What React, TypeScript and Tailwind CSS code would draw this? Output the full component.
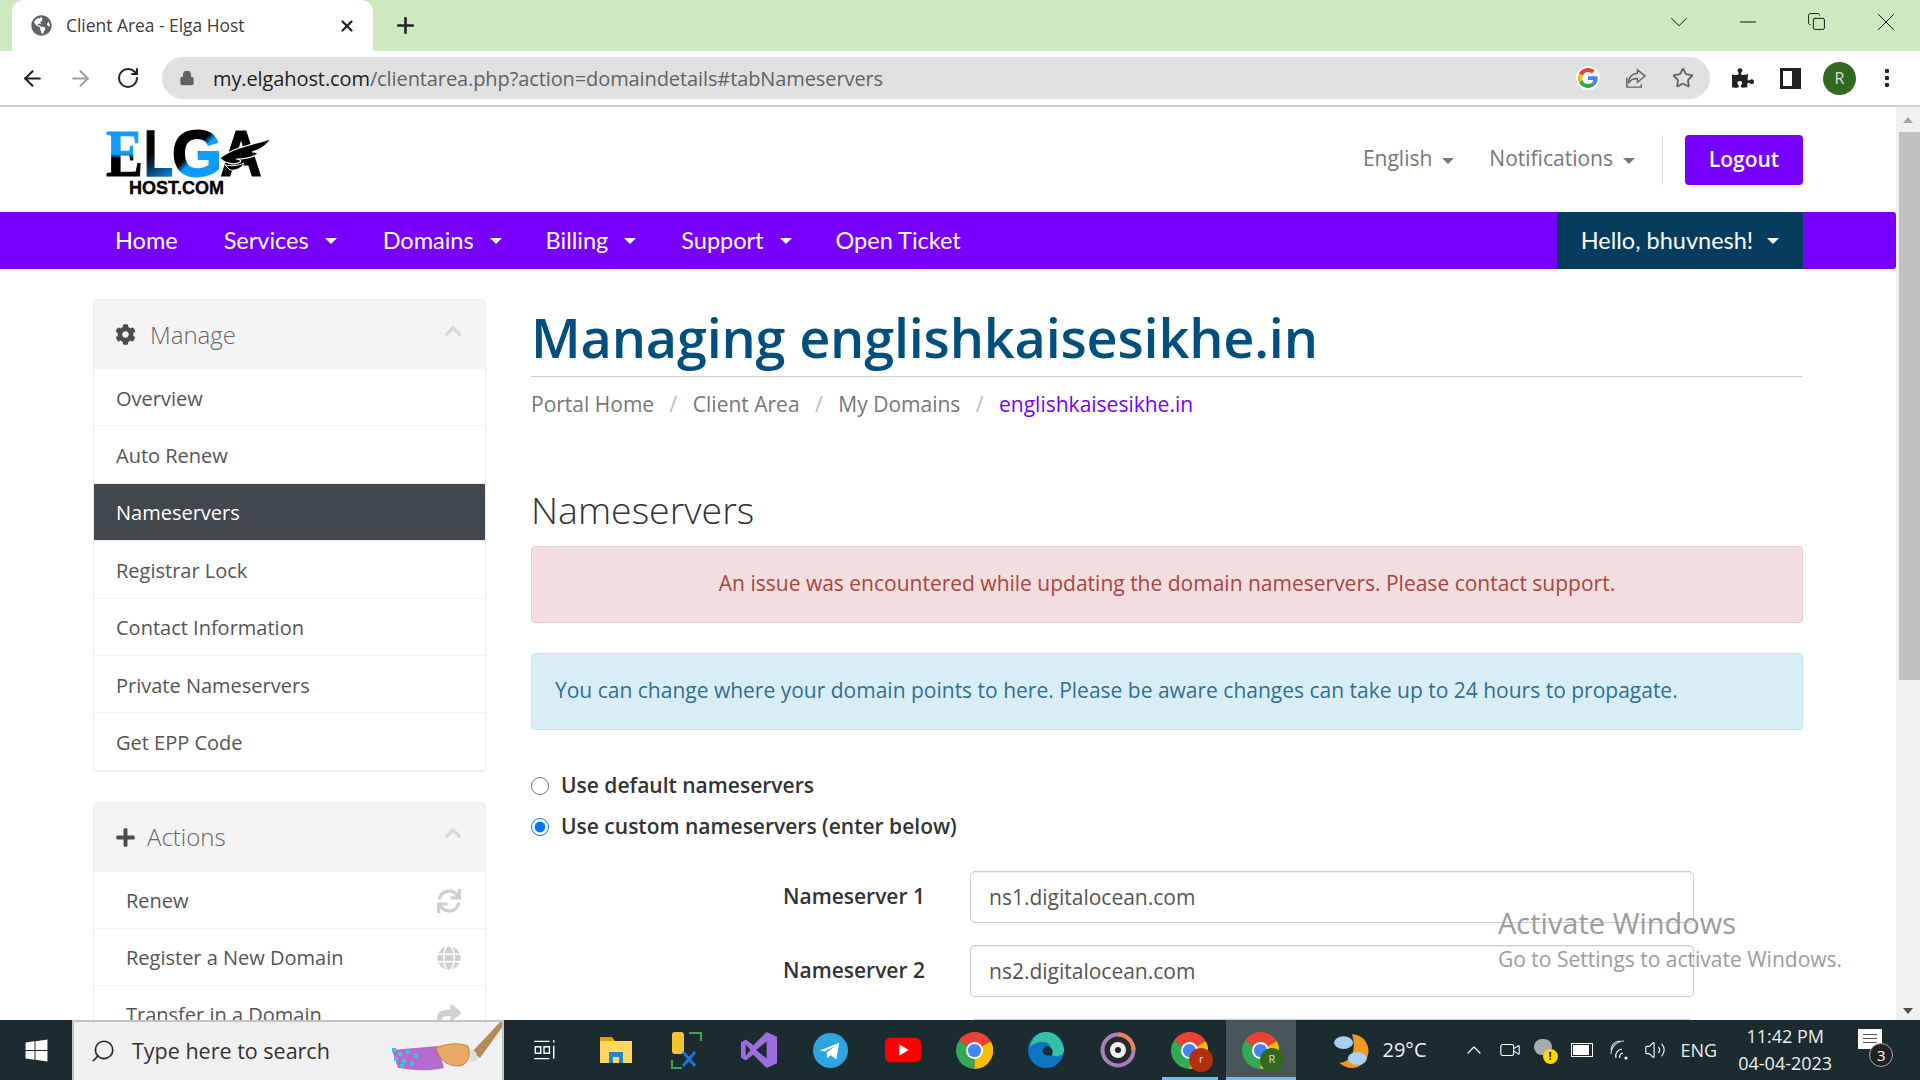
import React from 'react';
import { ArrowLeft, ArrowRight, RotateCw, Lock, Star, MoreVertical, Search, X, Plus, ChevronDown, Minus, Copy, ChevronUp, Volume2, Video } from 'lucide-react';
import { FaCog, FaPlus, FaSync, FaGlobe, FaShare, FaWindows, FaGlobeAmericas, FaPuzzlePiece } from 'react-icons/fa';

const sans = 'font-["Open_Sans",sans-serif]';

const Caret = ({ className = '' }: { className?: string }) => (
  <span className={`inline-block w-0 h-0 border-x-[6px] border-x-transparent border-t-[6px] border-t-current ${className}`} />
);

const ChromeIcon = ({ badge, badgeColor }: { badge?: string; badgeColor?: string }) => (
  <div className="relative w-[37px] h-[37px]">
    <svg viewBox="0 0 48 48" className="w-full h-full">
      <path d="M24 24 L45 12 A24 24 0 0 0 4 11 Z" fill="#ea4335" />
      <path d="M24 24 L4 11 A24 24 0 0 0 24 48 Z" fill="#34a853" />
      <path d="M24 24 L24 48 A24 24 0 0 0 45 12 Z" fill="#fbbc04" />
      <circle cx="24" cy="24" r="11" fill="#fff" />
      <circle cx="24" cy="24" r="8.5" fill="#4285f4" />
    </svg>
    {badge && (
      <span className={`absolute right-[-5px] bottom-[-3px] w-[24px] h-[24px] rounded-full flex items-center justify-center text-[11px] text-[#ddd] ${badgeColor}`}>
        {badge}
      </span>
    )}
  </div>
);

const Logo = () => (
  <svg viewBox="0 0 170 72" className="w-[170px] h-[72px] overflow-visible">
    <defs>
      <linearGradient id="elgaE" gradientUnits="userSpaceOnUse" x1="0" y1="6" x2="0" y2="52">
        <stop offset="0.52" stopColor="#0f9bff" />
        <stop offset="0.62" stopColor="#000" />
      </linearGradient>
      <linearGradient id="elgaL" gradientUnits="userSpaceOnUse" x1="44" y1="6" x2="72" y2="52">
        <stop offset="0.4" stopColor="#000" />
        <stop offset="1" stopColor="#0f8fef" />
      </linearGradient>
      <linearGradient id="elgaG" gradientUnits="userSpaceOnUse" x1="70" y1="6" x2="118" y2="52">
        <stop offset="0.42" stopColor="#000" />
        <stop offset="0.52" stopColor="#0f9bff" />
      </linearGradient>
    </defs>
    <text y="51.500" fontFamily="'Liberation Sans',sans-serif" fontWeight="700" fontSize="64">
      <tspan x="2" fontFamily="'Liberation Serif',serif" fontSize="68" fill="url(#elgaE)" stroke="url(#elgaE)" strokeWidth="1" textLength="37" lengthAdjust="spacingAndGlyphs">E</tspan>
      <tspan x="40" fill="url(#elgaL)" stroke="url(#elgaL)" strokeWidth="1.500" textLength="29" lengthAdjust="spacingAndGlyphs">L</tspan>
      <tspan x="68" fill="url(#elgaG)" stroke="url(#elgaG)" strokeWidth="2" textLength="50" lengthAdjust="spacingAndGlyphs">G</tspan>
      <tspan x="116" fill="#000" stroke="#000" strokeWidth="1" textLength="42" lengthAdjust="spacingAndGlyphs">A</tspan>
    </text>
    <path d="M116 34 C128 24 150 20 167 15 C162 22 156 26 148 28 C154 28 155 29 152 31 C146 34 138 35 132 35 C138 36 138 38 134 39 C129 41 120 39 116 34 Z" fill="#000" stroke="#fff" strokeWidth="1.200" />
    <path d="M121 41 C127 42 134 42 140 39 C138 44 132 47 126 46 Z" fill="#000" stroke="#fff" strokeWidth="1" />
    <text x="25" y="69.500" fontFamily="'Liberation Sans',sans-serif" fontWeight="700" fontSize="19" fill="#000" stroke="#000" strokeWidth="0.400" textLength="95" lengthAdjust="spacingAndGlyphs">HOST.COM</text>
  </svg>
);

const menu = [
  { label: 'Overview' },
  { label: 'Auto Renew' },
  { label: 'Nameservers', active: true },
  { label: 'Registrar Lock' },
  { label: 'Contact Information' },
  { label: 'Private Nameservers' },
  { label: 'Get EPP Code' },
];

const actions = [
  { label: 'Renew', icon: <FaSync /> },
  { label: 'Register a New Domain', icon: <FaGlobe /> },
  { label: 'Transfer in a Domain', icon: <FaShare /> },
];

const PanelHead = ({ icon, title, titleClass }: { icon: React.ReactNode; title: string; titleClass: string }) => (
  <div className="h-[69px] bg-[#f4f4f4] flex items-center pl-[21px] pr-[19px] rounded-t-[4px]">
    <span className="w-[22px] flex text-[21px] text-[#4d4d4d]">{icon}</span>
    <span className={`text-[24px] font-light text-[#666] ${titleClass}`}>{title}</span>
    <ChevronUp className="ml-auto mb-[8px] text-[#d9d9d9]" size={26} strokeWidth={3} />
  </div>
);

const NsRow = ({ label, value }: { label: string; value: string }) => (
  <div className="flex items-center h-[52px] mb-[22px]">
    <label className="w-[439px] pr-[45px] text-right text-[21px] font-semibold text-[#333]">{label}</label>
    <input
      readOnly
      value={value}
      className="w-[724px] h-[52px] px-[18px] rounded-[5px] border border-[#ccc] shadow-[inset_0_1px_1px_rgba(0,0,0,0.075)] text-[21px] text-[#555] bg-white outline-none"
    />
  </div>
);

const Slot = ({ children }: { children: React.ReactNode }) => (
  <div className="w-[71.750px] h-[60px] flex items-center justify-center relative">{children}</div>
);

export default function App() {
  return (
    <div className={`w-[1920px] h-[1080px] flex flex-col overflow-hidden bg-white relative ${sans}`}>
      {/* tab strip */}
      <div className="h-[51px] shrink-0 bg-[#cce9c0] flex items-end pl-[12px]">
        <div className="w-[361px] h-[51px] bg-white rounded-t-[12px] flex items-center pl-[19px] pr-[17px]">
          <FaGlobeAmericas className="text-[#5f6368]" size={21} />
          <span className="ml-[14px] text-[17.400px] text-[#3c3c3c]">Client Area - Elga Host</span>
          <X className="ml-auto text-[#222]" size={18} strokeWidth={3} />
        </div>
        <Plus className="ml-[20px] mb-[13px] text-[#222]" size={25} strokeWidth={2.5} />
        <div className="ml-auto flex items-center h-[51px] text-[#111] pb-[8px]">
          <span className="w-[69px] flex justify-center"><ChevronDown size={30} strokeWidth={0.8} /></span>
          <span className="w-[69px] flex justify-center"><Minus size={26} strokeWidth={1} /></span>
          <span className="w-[69px] flex justify-center"><Copy size={19} strokeWidth={1.2} /></span>
          <span className="w-[69px] flex justify-center"><X size={30} strokeWidth={0.8} /></span>
        </div>
      </div>

      {/* toolbar */}
      <div className="h-[56px] shrink-0 bg-white flex items-center border-b-[2px] border-[#cfcfcf]">
        <ArrowLeft className="ml-[20px] text-[#222]" size={25} strokeWidth={2} />
        <ArrowRight className="ml-[23px] text-[#a0a0a0]" size={25} strokeWidth={2} />
        <RotateCw className="ml-[23px] text-[#222]" size={24} strokeWidth={2} />
        <div className="ml-[22px] w-[1548px] h-[42px] rounded-full bg-[#e0e0e0] flex items-center pl-[17px] pr-[16px]">
          <Lock className="text-[#5f6368]" size={16} fill="#5f6368" />
          <span className="ml-[18px] mt-[1px] text-[20px] tracking-[-0.1px] text-[#222]">
            my.elgahost.com<span className="text-[#5f6368]">/clientarea.php?action=domaindetails#tabNameservers</span>
          </span>
          <span className="ml-auto mr-[3px] w-[24px] h-[24px] rounded-full bg-white flex items-center justify-center">
            <svg viewBox="0 0 48 48" className="w-[20px] h-[20px]">
              <path fill="#ea4335" d="M24 9.500c3.500 0 6.700 1.300 9.200 3.400l6.900-6.900C35.900 2.200 30.300 0 24 0 14.600 0 6.500 5.400 2.600 13.200l8 6.200C12.500 13.600 17.800 9.500 24 9.500z" />
              <path fill="#4285f4" d="M47 24.500c0-1.600-.1-3.100-.4-4.500H24v9h13c-.6 3-2.200 5.500-4.800 7.200l7.700 6C44.400 38 47 31.800 47 24.500z" />
              <path fill="#fbbc04" d="M10.600 28.600A14.500 14.500 0 0 1 10.600 19.400l-8-6.200a24 24 0 0 0 0 21.600z" />
              <path fill="#34a853" d="M24 48c6.500 0 11.900-2.100 15.900-5.800l-7.700-6c-2.200 1.400-4.900 2.300-8.200 2.300-6.200 0-11.500-4.200-13.400-9.900l-8 6.200C6.500 42.600 14.600 48 24 48z" />
            </svg>
          </span>
          <svg viewBox="0 0 24 24" className="ml-[21px] w-[23px] h-[23px]" fill="none" stroke="#5f6368" strokeWidth="1.500">
            <path d="M3 11v10h15v-3" />
            <path d="M14 3l8 6.500-8 6.500v-4c-4 0-7 1-9.500 5 .5-6 4-10 9.500-10.500z" />
          </svg>
          <Star className="ml-[25px] text-[#5f6368]" size={22} strokeWidth={2} />
        </div>
        <FaPuzzlePiece className="ml-[22px] text-[#202124]" size={22} />
        <span className="ml-[26px] w-[21px] h-[21px] border-[3px] border-r-[9px] border-[#202124]" />
        <span className="ml-[22px] w-[33px] h-[33px] rounded-full bg-[#33691e] text-[#ddd] text-[16px] flex items-center justify-center">R</span>
        <MoreVertical className="ml-[19px] text-[#202124]" size={24} strokeWidth={2.5} />
      </div>

      {/* page */}
      <div className="flex-1 min-h-0 flex overflow-hidden">
        <div className="w-[1896px] overflow-hidden">
          <div className="h-[105px] flex items-center pl-[104px] pr-[93px]">
            <Logo />
            <div className="ml-auto flex items-center text-[#777] text-[21px]">
              <span className="mt-[-2px]">English</span>
              <Caret className="ml-[10px] mt-[2px]" />
              <span className="ml-[35px] mt-[-2px]">Notifications</span>
              <Caret className="ml-[10px] mt-[2px]" />
              <span className="ml-[27px] h-[50px] border-l border-[#ddd]" />
              <button className="ml-[22px] w-[118px] h-[50px] rounded-[4px] bg-[#7800ff] text-white text-[21px] font-semibold">Logout</button>
            </div>
          </div>

          <div className="h-[57px] bg-[#7800ff] rounded-r-[3px] flex items-center pl-[115px] pr-[93px] text-white text-[23.500px] font-['Lato',sans-serif]">
            <span>Home</span>
            <span className="ml-[46px]">Services</span>
            <Caret className="ml-[16px]" />
            <span className="ml-[46px]">Domains</span>
            <Caret className="ml-[16px]" />
            <span className="ml-[44px]">Billing</span>
            <Caret className="ml-[16px]" />
            <span className="ml-[45px]">Support</span>
            <Caret className="ml-[16px]" />
            <span className="ml-[44px]">Open Ticket</span>
            <div className="ml-auto w-[246px] h-full bg-[#063d5f] flex items-center justify-center">
              Hello, bhuvnesh!
              <Caret className="ml-[14px]" />
            </div>
          </div>

          <div className="flex pl-[93px] pr-[92px] pt-[30px] gap-[45px]">
            {/* sidebar */}
            <div className="w-[393px] shrink-0">
              <div className="border border-[#eee] rounded-[4px] mb-[30px]">
                <PanelHead icon={<FaCog />} title="Manage" titleClass="ml-[13px]" />
                {menu.map(item => (
                  <div
                    key={item.label}
                    className={`h-[57.400px] flex items-center pl-[22px] pt-[3px] text-[20px] border-b border-[#f1f1f1] ${
                      item.active ? 'bg-[#41484d] text-white' : 'text-[#555]'
                    }`}
                  >
                    {item.label}
                  </div>
                ))}
              </div>
              <div className="border border-[#eee] rounded-[4px]">
                <PanelHead icon={<FaPlus />} title="Actions" titleClass="ml-[10px]" />
                {actions.map(item => (
                  <div key={item.label} className="h-[57px] flex items-center pl-[32px] pr-[24px] pt-[2px] text-[20px] text-[#555] border-b border-[#f1f1f1]">
                    {item.label}
                    <span className="ml-auto text-[24px] text-[#d0d0d0]">{item.icon}</span>
                  </div>
                ))}
              </div>
            </div>

            {/* main */}
            <div className="w-[1272px]">
              <h1 className="text-[54px] leading-[76px] font-semibold tracking-[-0.2px] text-[#004f7e] pb-[1px] border-b border-[#ccc]">
                Managing englishkaisesikhe.in
              </h1>
              <div className="flex items-center mt-[12px] text-[21px] text-[#777]">
                <span>Portal Home</span>
                <span className="mx-[15.500px] text-[#bbb]">/</span>
                <span>Client Area</span>
                <span className="mx-[15.500px] text-[#bbb]">/</span>
                <span>My Domains</span>
                <span className="mx-[15.500px] text-[#bbb]">/</span>
                <span className="text-[#7800ff]">englishkaisesikhe.in</span>
              </div>
              <h2 className="mt-[64px] text-[37.500px] leading-[50px] font-light text-[#333]">Nameservers</h2>
              <div className="mt-[11px] h-[77px] rounded-[4px] bg-[#f2dede] border border-[#ebccd1] flex items-center justify-center text-[21px] text-[#a94442]">
                An issue was encountered while updating the domain nameservers. Please contact support.
              </div>
              <div className="mt-[30px] h-[77px] rounded-[4px] bg-[#d9edf7] border border-[#bce8f1] flex items-center pl-[23px] text-[21px] text-[#31708f]">
                You can change where your domain points to here. Please be aware changes can take up to 24 hours to propagate.
              </div>
              <label className="mt-[36px] h-[41px] flex items-center text-[21px] font-semibold text-[#333]">
                <input type="radio" name="ns" readOnly className="w-[18px] h-[18px] mr-[12px] accent-[#0075ff]" />
                Use default nameservers
              </label>
              <label className="h-[41px] flex items-center text-[21px] font-semibold text-[#333]">
                <input type="radio" name="ns" checked readOnly className="w-[18px] h-[18px] mr-[12px] accent-[#0075ff]" />
                Use custom nameservers (enter below)
              </label>
              <div className="mt-[23px]">
                <NsRow label="Nameserver 1" value="ns1.digitalocean.com" />
                <NsRow label="Nameserver 2" value="ns2.digitalocean.com" />
                <NsRow label="" value="" />
              </div>
            </div>
          </div>
        </div>

        {/* scrollbar */}
        <div className="w-[24px] bg-[#f1f1f1] flex flex-col items-center">
          <span className="mt-[10px] w-0 h-0 border-x-[5px] border-x-transparent border-b-[6px] border-b-[#a3a3a3]" />
          <div className="mt-[9px] w-[21px] ml-[2px] h-[548px] bg-[#c1c1c1]" />
          <span className="mt-auto mb-[6px] w-0 h-0 border-x-[5px] border-x-transparent border-t-[6px] border-t-[#505050]" />
        </div>
      </div>

      {/* taskbar */}
      <div className="h-[60px] shrink-0 bg-[#1b2b30] flex items-center text-white">
        <div className="w-[72px] flex justify-center"><FaWindows size={25} /></div>
        <div className="w-[432px] h-full bg-[#f0f0f0] border-t-[2px] border-x-[2px] border-[#c4c4c4] flex items-center pl-[16px] overflow-hidden relative">
          <Search className="text-[#222] -scale-x-100" size={26} strokeWidth={1.5} />
          <span className="ml-[16px] text-[21.500px] text-[#333]">Type here to search</span>
          <svg viewBox="0 0 120 60" className="absolute right-[-2px] top-[-2px] w-[120px] h-[60px]">
            <path d="M8 30 L54 26 L60 48 C44 52 26 50 14 48 Z" fill="#a855c7" opacity="0.85" />
            <g fill="#39c5d8">
              <rect x="8" y="28" width="4" height="4" />
              <rect x="14" y="32" width="4" height="4" />
              <rect x="10" y="37" width="4" height="4" />
              <rect x="18" y="39" width="4" height="4" />
              <rect x="22" y="30" width="4" height="4" />
              <rect x="16" y="44" width="4" height="4" />
              <rect x="26" y="42" width="4" height="4" />
              <rect x="30" y="34" width="4" height="4" />
            </g>
            <path d="M88 32 L118 0 L122 2 L96 38 Z" fill="#b48a58" />
            <path d="M84 28 L92 32 L94 40 L86 42 Z" fill="#ddd" />
            <path d="M84 26 C74 22 60 24 52 28 C54 38 62 46 74 46 C82 46 88 38 84 26 Z" fill="#e9a867" stroke="#b8732e" strokeWidth="0.800" />
          </svg>
        </div>
        <div className="flex items-center ml-[4px]">
          <Slot>
            <svg viewBox="0 0 24 24" className="w-[26px] h-[26px]" fill="none" stroke="#fff" strokeWidth="1.300">
              <path d="M3 4h14M3 20h14M4 9h5v6H4zM12 9h5v6h-5zM21 3v2M21 8v12" />
            </svg>
          </Slot>
          <Slot>
            <svg viewBox="0 0 32 26" className="w-[32px] h-[26px]">
              <path d="M0 0h12l3 4H0z" fill="#e0a100" />
              <rect y="4" width="32" height="22" fill="#ffd75e" />
              <path d="M9 26V15h14v11h-4v-6h-6v6z" fill="#1e88c7" />
            </svg>
          </Slot>
          <Slot>
            <svg viewBox="0 0 36 40" className="w-[36px] h-[40px]">
              <rect x="3" y="2" width="12" height="22" rx="3" fill="#f4c430" />
              <path d="M20 3h12v8M3 30v8h10" fill="none" stroke="#3fa34d" strokeWidth="2" />
              <path d="M14 36l12-14M26 36L14 22" stroke="#1976d2" strokeWidth="3" />
            </svg>
          </Slot>
          <Slot>
            <svg viewBox="0 0 40 40" className="w-[38px] h-[38px]">
              <path d="M28 1l11 5v28l-11 5-14-14-8 6-5-3V12l5-3 8 6z" fill="#9b6ddf" />
              <path d="M28 11L17 20l11 9z" fill="#1b2b30" />
              <path d="M6 14v12l5-6z" fill="#1b2b30" />
            </svg>
          </Slot>
          <Slot>
            <svg viewBox="0 0 36 36" className="w-[35px] h-[35px]">
              <circle cx="18" cy="18" r="18" fill="#2ca5e0" />
              <path d="M7 18l20-8-3 17-6-4-3 3-1-6 9-7-11 6z" fill="#fff" />
            </svg>
          </Slot>
          <Slot>
            <svg viewBox="0 0 38 26" className="w-[36px] h-[28px]">
              <rect width="38" height="26" rx="6" fill="#f00" />
              <path d="M15 7l10 6-10 6z" fill="#fff" />
            </svg>
          </Slot>
          <Slot><ChromeIcon /></Slot>
          <Slot>
            <svg viewBox="0 0 36 36" className="w-[36px] h-[36px]">
              <circle cx="18" cy="18" r="18" fill="#0f74c4" />
              <path d="M2 15C4 5 11 0 18 0c9 0 17 7 18 18 0 5-5 7-10 6-4-1-5-5-3-8-1-4-4-6-8-6-6 0-10 2-13 5z" fill="#35c1a8" />
              <path d="M18 14c5 0 8 4 6 9-2 1-7 1-9-2-1-2 0-5 3-7z" fill="#1b2b30" />
            </svg>
          </Slot>
          <Slot>
            <svg viewBox="0 0 36 36" className="w-[36px] h-[36px]">
              <circle cx="18" cy="18" r="15.500" fill="#2a2a2a" stroke="#a77fbf" strokeWidth="4" />
              <path d="M18 2.500A15.500 15.500 0 0 1 33.500 18" fill="none" stroke="#e8835a" strokeWidth="4" />
              <circle cx="18" cy="18" r="8" fill="#eee" />
              <circle cx="18" cy="18" r="3" fill="#222" />
            </svg>
          </Slot>
          <Slot>
            <ChromeIcon badge="r" badgeColor="bg-[#b32f0f]" />
            <span className="absolute bottom-0 left-[8px] right-[8px] h-[3px] bg-[#76b9ed]" />
          </Slot>
          <div className="w-[70px] h-[60px] flex items-center justify-center relative bg-[#48565b]">
            <ChromeIcon badge="R" badgeColor="bg-[#33691e]" />
            <span className="absolute bottom-0 left-0 right-0 h-[3px] bg-[#76b9ed]" />
          </div>
        </div>
        <svg viewBox="0 0 36 36" className="ml-[37px] w-[38px] h-[38px]">
          <path d="M18 3a16 16 0 1 1-12 27c10 0 17-10 12-27z" fill="#f29a1f" />
          <ellipse cx="10" cy="11" rx="9" ry="6" fill="#a9d2f2" />
          <ellipse cx="23" cy="26" rx="9" ry="6" fill="#a9d2f2" />
        </svg>
        <span className="ml-[12px] text-[20px] text-[#eee]">29°C</span>
        <ChevronUp className="ml-[35px]" size={24} strokeWidth={1.2} />
        <Video className="ml-[13px]" size={22} strokeWidth={1.2} />
        <div className="ml-[13px] relative w-[24px] h-[22px]">
          <span className="absolute left-0 top-0 w-[18px] h-[16px] rounded-full bg-[#aaa]" />
          <span className="absolute right-0 bottom-[-3px] w-[15px] h-[15px] rounded-full bg-[#ffd800] text-[#111] text-[11px] font-bold flex items-center justify-center">!</span>
        </div>
        <span className="ml-[13px] w-[22px] h-[14px] border border-white p-[1px]"><span className="block h-full w-[16px] bg-white" /></span>
        <svg viewBox="0 0 22 22" className="ml-[16px] w-[22px] h-[22px]" fill="none" stroke="#fff" strokeWidth="1.200">
          <path d="M2 15A13 13 0 0 1 15 2M2 11a9 9 0 0 1 9-9" opacity="0.8" />
          <path d="M7 19a7 7 0 0 1 6-9M11 19a3.500 3.500 0 0 1 3-5" />
          <circle cx="17" cy="19" r="1" fill="#fff" />
        </svg>
        <Volume2 className="ml-[13px]" size={22} strokeWidth={1.2} />
        <span className="ml-[15px] text-[18px] text-[#eee]">ENG</span>
        <div className="ml-[18px] w-[100px] flex flex-col items-center text-[18px] leading-[27px] text-[#eee]">
          <span>11:42 PM</span>
          <span>04-04-2023</span>
        </div>
        <div className="ml-[23px] relative w-[34px] h-[42px]">
          <span className="absolute left-0 top-0 w-[24px] h-[20px] bg-white flex flex-col gap-[3px] p-[5px]">
            <span className="h-[1px] bg-[#555]" />
            <span className="h-[1px] bg-[#555]" />
            <span className="h-[1px] bg-[#555]" />
          </span>
          <span className="absolute left-[11px] top-[14px] w-[24px] h-[24px] rounded-full bg-[#222] border border-[#aaa] text-[15px] text-white flex items-center justify-center">3</span>
        </div>
      </div>

      {/* windows watermark over the page */}
      <div className="absolute left-[1498px] top-[905px] text-[#9c9c9c] pointer-events-none">
        <div className="text-[29px] leading-[36px]">Activate Windows</div>
        <div className="mt-[4px] text-[21px] leading-[28px]">Go to Settings to activate Windows.</div>
      </div>
    </div>
  );
}
